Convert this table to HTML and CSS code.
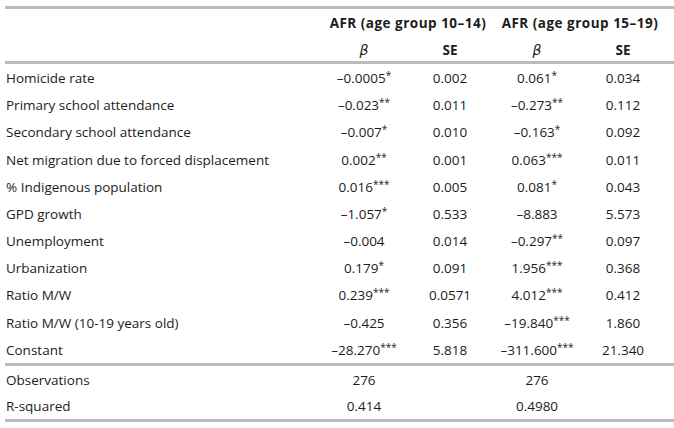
FILE: index.html
```html
<!DOCTYPE html>
<html lang="en">
<head>
<meta charset="utf-8">
<title>AFR regression table</title>
<link rel="stylesheet" href="styles.css">
</head>
<body>
<div class="reg">
  <div class="sect head">
    <div class="row hrow"><div class="lab"></div><div class="grp">AFR (age group 10–14)</div><div class="grp">AFR (age group 15–19)</div></div>
    <div class="row hrow"><div class="lab"></div><div class="beta">β</div><div class="se">SE</div><div class="beta">β</div><div class="se">SE</div></div>
  </div>
  <div class="sect body">
    <div class="row brow"><div class="lab">Homicide rate</div><div>–0.0005<sup>*</sup></div><div>0.002</div><div>0.061<sup>*</sup></div><div>0.034</div></div>
    <div class="row brow"><div class="lab">Primary school attendance</div><div>–0.023<sup>**</sup></div><div>0.011</div><div>–0.273<sup>**</sup></div><div>0.112</div></div>
    <div class="row brow"><div class="lab">Secondary school attendance</div><div>–0.007<sup>*</sup></div><div>0.010</div><div>–0.163<sup>*</sup></div><div>0.092</div></div>
    <div class="row brow"><div class="lab">Net migration due to forced displacement</div><div>0.002<sup>**</sup></div><div>0.001</div><div>0.063<sup>***</sup></div><div>0.011</div></div>
    <div class="row brow"><div class="lab">% Indigenous population</div><div>0.016<sup>***</sup></div><div>0.005</div><div>0.081<sup>*</sup></div><div>0.043</div></div>
    <div class="row brow"><div class="lab">GPD growth</div><div>–1.057<sup>*</sup></div><div>0.533</div><div>–8.883</div><div>5.573</div></div>
    <div class="row brow"><div class="lab">Unemployment</div><div>–0.004</div><div>0.014</div><div>–0.297<sup>**</sup></div><div>0.097</div></div>
    <div class="row brow"><div class="lab">Urbanization</div><div>0.179<sup>*</sup></div><div>0.091</div><div>1.956<sup>***</sup></div><div>0.368</div></div>
    <div class="row brow"><div class="lab">Ratio M/W</div><div>0.239<sup>***</sup></div><div>0.0571</div><div>4.012<sup>***</sup></div><div>0.412</div></div>
    <div class="row brow"><div class="lab">Ratio M/W (10-19 years old)</div><div>–0.425</div><div>0.356</div><div>–19.840<sup>***</sup></div><div>1.860</div></div>
    <div class="row brow"><div class="lab">Constant</div><div>–28.270<sup>***</sup></div><div>5.818</div><div>–311.600<sup>***</sup></div><div>21.340</div></div>
  </div>
  <div class="sect foot">
    <div class="row frow"><div class="lab">Observations</div><div>276</div><div></div><div>276</div><div></div></div>
    <div class="row frow"><div class="lab">R-squared</div><div>0.414</div><div></div><div>0.4980</div><div></div></div>
  </div>
</div>
</body>
</html>
```

FILE: styles.css
```css
html, body {
  margin: 0;
  padding: 0;
  background: #ffffff;
}
body {
  padding: 6px 0 0 5px;
}
.reg {
  width: 669px;
  font-family: "Open Sans", "Noto Sans", sans-serif;
  font-size: 13.5px;
  color: #1c1c1c;
  border-top: 3px solid #bbbbbb;
}
.sect {
  border-bottom: 3px solid #bbbbbb;
}
.row {
  display: grid;
  grid-template-columns: 317px 84px 88px 86px 86px;
  align-items: center;
  text-align: center;
  white-space: nowrap;
  line-height: 16px;
}
.hrow { height: 26px; }
.brow { height: 27.18px; }
.frow { height: 26.5px; }
.row .lab {
  text-align: left;
  padding-left: 1px;
}
.grp {
  grid-column: span 2;
  font-weight: 700;
  letter-spacing: 0.5px;
  padding-top: 1px;
}
.se {
  font-weight: 700;
  padding-top: 3px;
}
.beta {
  font-style: italic;
  font-family: "DejaVu Sans", sans-serif;
  font-size: 14px;
  padding-top: 3px;
}
.brow, .frow {
  padding-top: 1px;
  box-sizing: border-box;
}
sup {
  font-size: 10px;
  line-height: 0;
  vertical-align: 4px;
}
```
